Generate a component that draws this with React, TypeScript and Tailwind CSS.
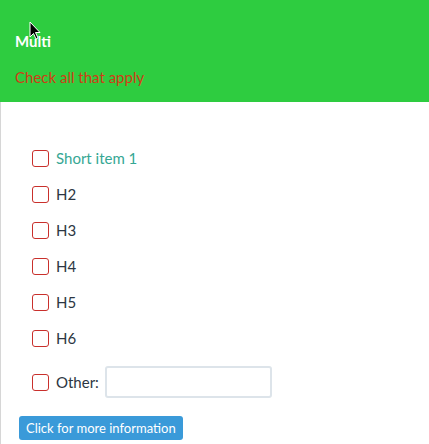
import { useState } from 'react';

const items = ['Short item 1', 'H2', 'H3', 'H4', 'H5', 'H6'];

const Box = ({ checked, onClick }: { checked: boolean; onClick: () => void }) => (
  <button
    onClick={onClick}
    className="w-[17px] h-[17px] shrink-0 rounded-[3px] border-[1.5px] border-[#c9302c] bg-white flex items-center justify-center"
  >
    {checked && <span className="w-2 h-2 bg-[#c9302c] rounded-[1px]" />}
  </button>
);

const App = () => {
  const [checked, setChecked] = useState<boolean[]>(Array(7).fill(false));
  const toggle = (i: number) => setChecked((c) => c.map((v, j) => (j === i ? !v : v)));

  return (
    <div className="w-[429px] h-[444px] bg-white overflow-hidden font-['Lato',sans-serif] relative">
      {/* header */}
      <div className="bg-[#2ecc40] h-[102px] pl-[15px] pt-[31px]">
        <div className="text-white text-[15px] font-bold leading-[20px]">Multi</div>
        <div className="mt-[16px] text-[#cf3d17] text-[15px] leading-[20px]">Check all that apply</div>
      </div>

      {/* cursor */}
      <svg className="absolute left-[29px] top-[21px]" width="12" height="19" viewBox="0 0 12 19">
        <path d="M1 1 L1 16 L4.5 12.5 L7 18 L9 17 L6.5 11.5 L11 11.5 Z" fill="#000" stroke="#fff" strokeWidth="1" />
      </svg>

      <div className="border-l border-[#d6d6d6] h-[342px] pt-[38px]">
        <div className="pl-[31px]">
          {items.map((label, i) => (
            <div key={label} className="h-9 flex items-center gap-[7px]">
              <Box checked={checked[i]} onClick={() => toggle(i)} />
              <span className={`text-[15px] ${i === 0 ? 'text-[#35a794]' : 'text-[#2c3642]'}`}>{label}</span>
            </div>
          ))}
          <div className="mt-[10px] h-8 flex items-center gap-[7px]">
            <Box checked={checked[6]} onClick={() => toggle(6)} />
            <span className="text-[15px] text-[#2c3642]">Other:</span>
            <input className="ml-[-1px] w-[167px] h-8 border-2 border-[#dde4ea] rounded-[3px] outline-none px-2 text-[14px]" />
          </div>
        </div>
        <button className="ml-[18px] mt-[18px] h-6 px-[7px] bg-[#3a9ad9] text-white text-[13px] rounded-[3px] leading-6">
          Click for more information
        </button>
      </div>
    </div>
  );
};

export default App;
